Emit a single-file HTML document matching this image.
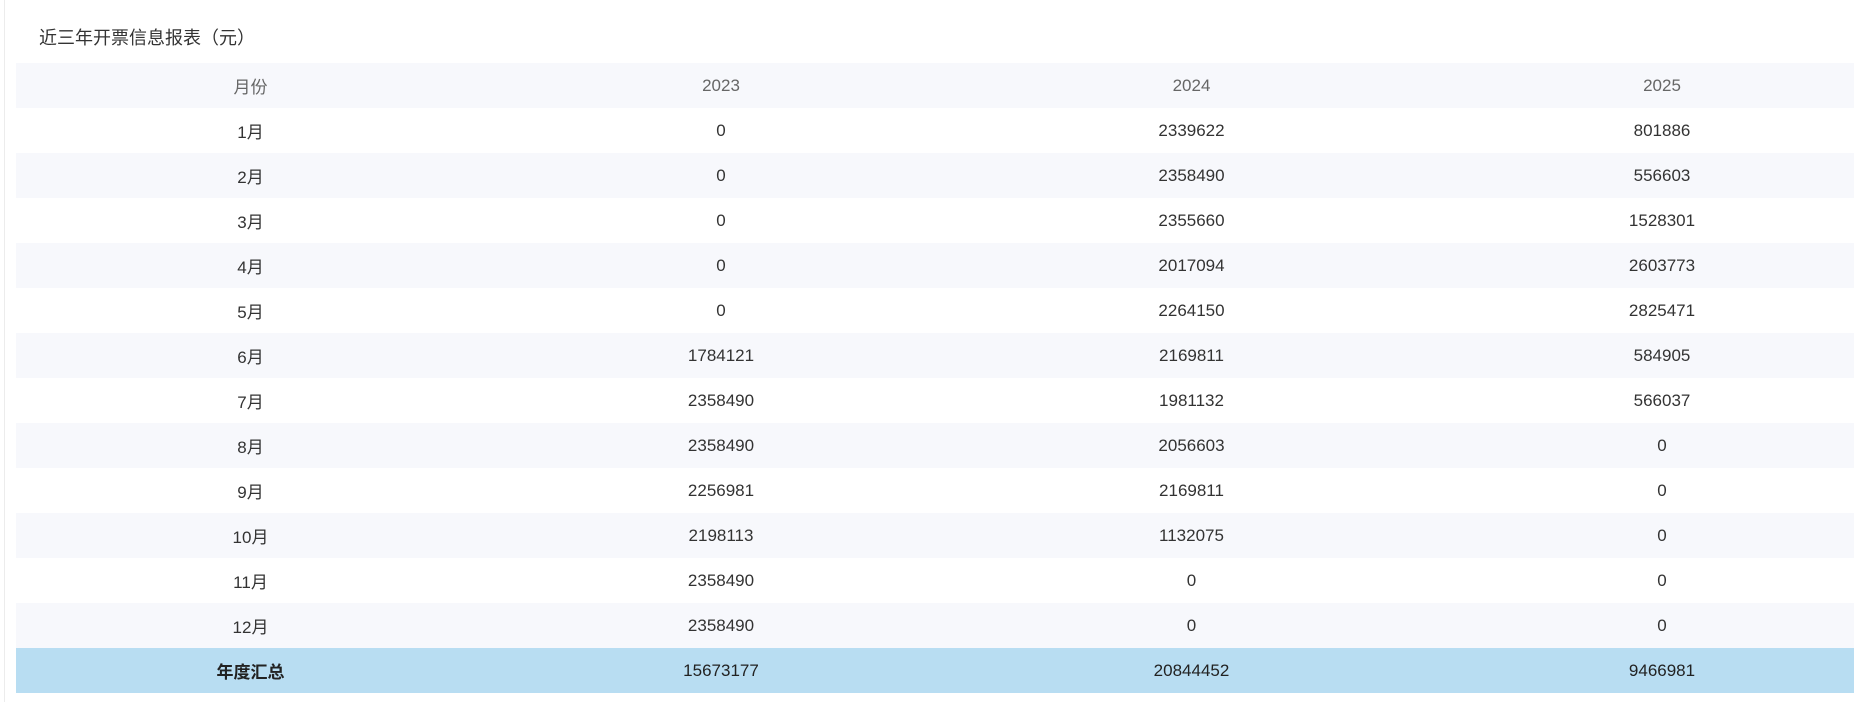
<!DOCTYPE html>
<html><head><meta charset="utf-8"><style>
html,body{margin:0;padding:0;background:#fff;width:1854px;height:702px;overflow:hidden;font-family:"Liberation Sans","Noto Sans CJK SC",sans-serif;}
.bl{position:absolute;left:4px;top:0;width:1px;height:702px;background:#ececec;}
.title{position:absolute;left:39px;top:24px;font-size:18px;color:#333;}
table{position:absolute;left:16px;top:63px;border-collapse:collapse;table-layout:fixed;width:1882px;}
td{height:45px;padding:0;text-align:center;font-size:17px;color:#333;}
tr:nth-child(odd) td{background:#f7f8fc;}
tr:nth-child(even) td{background:#fff;}
tr.h td{color:#666;}
tr.s td{background:#b8ddf2;color:#222;}
tr.s td:first-child{font-weight:bold;}
</style></head><body>
<div class="bl"></div>
<div class="title">近三年开票信息报表（元）</div>
<table>
<colgroup><col style="width:469px"><col style="width:472px"><col style="width:469px"><col style="width:472px"></colgroup>
<tr class="h"><td>月份</td><td>2023</td><td>2024</td><td>2025</td></tr>
<tr><td>1月</td><td>0</td><td>2339622</td><td>801886</td></tr>
<tr><td>2月</td><td>0</td><td>2358490</td><td>556603</td></tr>
<tr><td>3月</td><td>0</td><td>2355660</td><td>1528301</td></tr>
<tr><td>4月</td><td>0</td><td>2017094</td><td>2603773</td></tr>
<tr><td>5月</td><td>0</td><td>2264150</td><td>2825471</td></tr>
<tr><td>6月</td><td>1784121</td><td>2169811</td><td>584905</td></tr>
<tr><td>7月</td><td>2358490</td><td>1981132</td><td>566037</td></tr>
<tr><td>8月</td><td>2358490</td><td>2056603</td><td>0</td></tr>
<tr><td>9月</td><td>2256981</td><td>2169811</td><td>0</td></tr>
<tr><td>10月</td><td>2198113</td><td>1132075</td><td>0</td></tr>
<tr><td>11月</td><td>2358490</td><td>0</td><td>0</td></tr>
<tr><td>12月</td><td>2358490</td><td>0</td><td>0</td></tr>
<tr class="s"><td>年度汇总</td><td>15673177</td><td>20844452</td><td>9466981</td></tr>
</table>
</body></html>
